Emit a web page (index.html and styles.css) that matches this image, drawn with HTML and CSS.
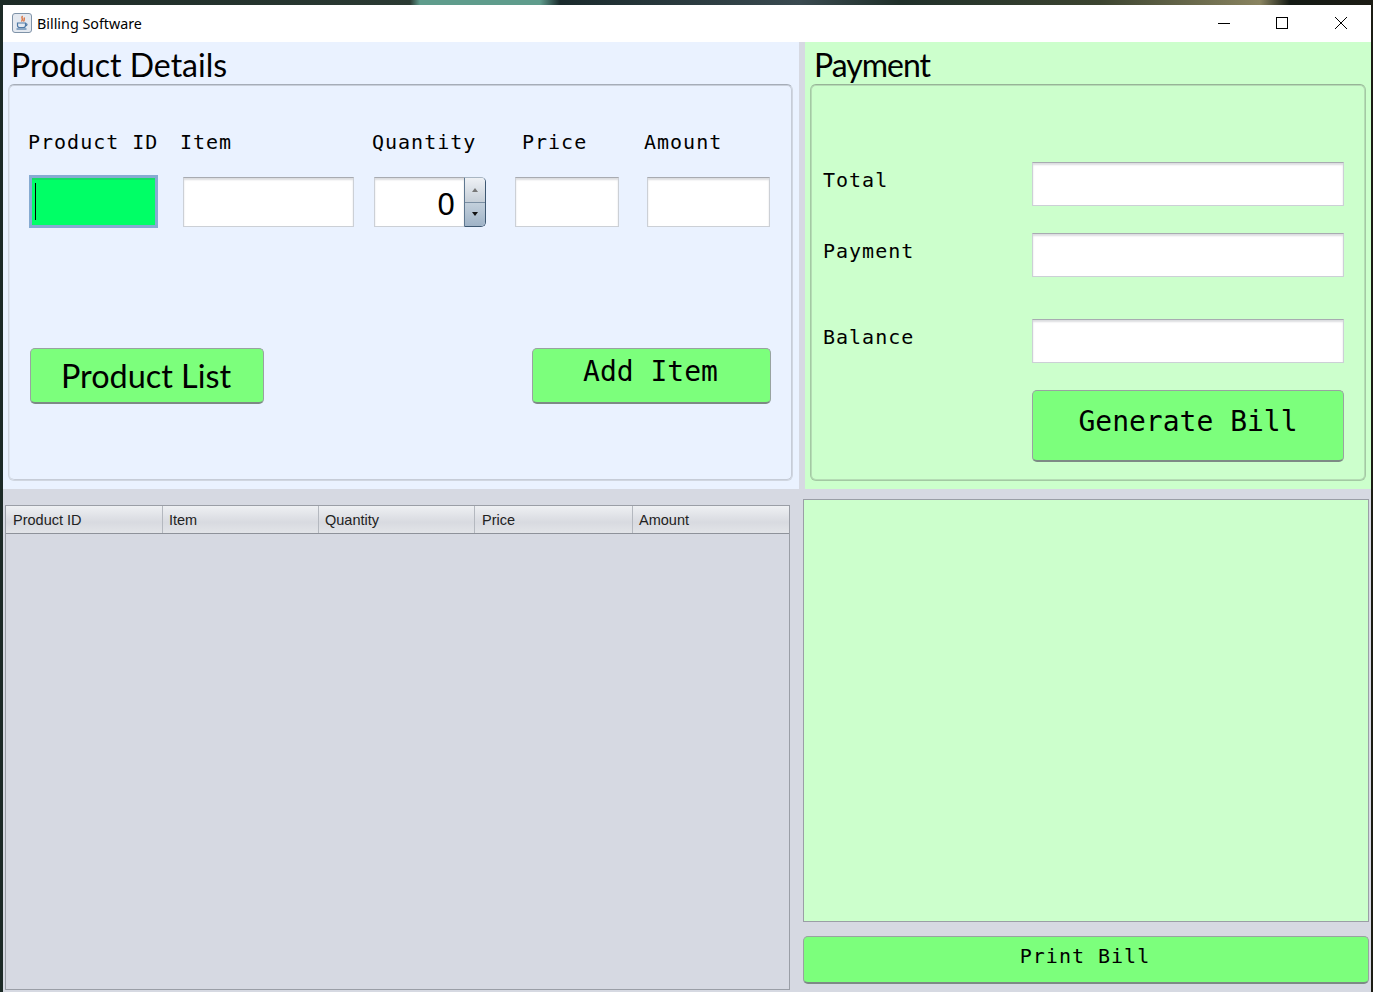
FILE: index.html
```html
<!DOCTYPE html>
<html>
<head>
    <meta charset="utf-8"/>
    <title>Billing Software</title>
    <link rel="stylesheet" href="styles.css">
</head>
<body>
<div class="window">
    <header class="titlebar">
        <div class="app-icon">
            <svg width="20" height="20" viewBox="0 0 20 20">
                <rect x="0.5" y="0.5" width="19" height="19" rx="2.5" fill="#e4e9f0" stroke="#7f93a8"/>
                <path d="M10.5 3C8.5 5 12 6 9.5 8.5M12.5 4.5C11.5 6 13 6.5 11.5 8.5" fill="none" stroke="#d9652b" stroke-width="1.3"/>
                <path d="M5.5 10h8v2.5c0 1.5-1 2-2 2h-4c-1 0-2-.5-2-2zM13.5 10.5c2 0 2 2.5-.2 2.5" fill="none" stroke="#4f7aa6" stroke-width="1.2"/>
                <path d="M4.5 16h10" stroke="#4f7aa6" stroke-width="1.2"/>
            </svg>
        </div>
        <span class="app-title">Billing Software</span>
        <div class="win-buttons">
            <svg class="win-min" width="12" height="12" viewBox="0 0 12 12"><path d="M0 6.5h12" stroke="#000" fill="none"/></svg>
            <svg width="12" height="12" viewBox="0 0 12 12"><rect x="0.5" y="0.5" width="11" height="11" stroke="#000" fill="none"/></svg>
            <svg width="12" height="12" viewBox="0 0 12 12"><path d="M0 0l12 12M12 0L0 12" stroke="#000" fill="none"/></svg>
        </div>
    </header>

    <div class="content">
        <div class="left-col">
            <section class="panel panel-blue">
                <h1 class="panel-title">Product Details</h1>
                <div class="group group-blue">
                    <div class="label-row">
                        <span class="mono-label lbl-id">Product ID</span>
                        <span class="mono-label lbl-item">Item</span>
                        <span class="mono-label lbl-qty">Quantity</span>
                        <span class="mono-label lbl-price">Price</span>
                        <span class="mono-label">Amount</span>
                    </div>
                    <div class="field-row">
                        <div class="field field-focus"><i class="caret"></i></div>
                        <div class="field field-item"></div>
                        <div class="spinner">
                            <div class="spin-value">0</div>
                            <div class="spin-btns">
                                <div class="spin-up"><i class="arrow-up"></i></div>
                                <div class="spin-down"><i class="arrow-down"></i></div>
                            </div>
                        </div>
                        <div class="field field-price"></div>
                        <div class="field field-amount"></div>
                    </div>
                    <div class="button-row">
                        <button class="btn btn-list">Product List</button>
                        <button class="btn btn-add">Add Item</button>
                    </div>
                </div>
            </section>

            <div class="table-box">
                <div class="table-head">
                    <div class="th th-1">Product ID</div>
                    <div class="th th-2">Item</div>
                    <div class="th th-3">Quantity</div>
                    <div class="th th-4">Price</div>
                    <div class="th th-5">Amount</div>
                </div>
            </div>
        </div>

        <div class="right-col">
            <section class="panel panel-green">
                <h1 class="panel-title title-pay">Payment</h1>
                <div class="group group-green">
                    <div class="pay-row pay-total">
                        <span class="mono-label">Total</span>
                        <div class="field pay-field"></div>
                    </div>
                    <div class="pay-row pay-payment">
                        <span class="mono-label">Payment</span>
                        <div class="field pay-field"></div>
                    </div>
                    <div class="pay-row pay-balance">
                        <span class="mono-label">Balance</span>
                        <div class="field pay-field"></div>
                    </div>
                    <button class="btn btn-generate">Generate Bill</button>
                </div>
            </section>

            <div class="bill-area"></div>
            <button class="btn btn-print">Print Bill</button>
        </div>
    </div>
</div>
</body>
</html>
```

FILE: styles.css
```css
html, body {
    margin: 0;
    padding: 0;
    height: 992px;
    overflow: hidden;
}
body {
    background: linear-gradient(90deg, #1c2a26 0, #2b3a33 410px, #5f9c8c 420px, #5f9c8c 540px, #1a2a2c 560px, #3a4a50 800px, #20302a 900px, #3c4430 1100px, #8a8460 1260px, #141a14 1290px, #1c1c14 100%);
}
.window {
    margin: 5px 2px 0 3px;
    height: 987px;
    display: flex;
    flex-direction: column;
    background: #d6d9e2;
}
.titlebar {
    height: 37px;
    flex: none;
    display: flex;
    align-items: center;
    background: #fff;
    padding-left: 9px;
}
.app-icon {
    width: 20px;
    height: 20px;
    margin-top: -1px;
}
.app-title {
    margin-left: 5px;
    font: 14.3px "Noto Sans", sans-serif;
    color: #000;
}
.win-buttons {
    margin-left: auto;
    display: flex;
    gap: 47px;
    padding-right: 24px;
    margin-top: -1px;
}
.win-min {
    margin-right: -1px;
}
.content {
    flex: 1;
    display: flex;
    gap: 6px;
}
.left-col {
    width: 796px;
    display: flex;
    flex-direction: column;
}
.right-col {
    width: 566px;
    display: flex;
    flex-direction: column;
}

/* titled panels */
.panel {
    height: 447px;
    box-sizing: border-box;
    padding-top: 6px;
}
.panel-blue {
    background: #eaf2ff;
    padding-left: 5px;
    padding-right: 6px;
}
.panel-green {
    background: #ccffcc;
    padding-left: 5px;
    padding-right: 5px;
}
.panel-title {
    margin: 0 0 0 3px;
    height: 36px;
    font: normal 32px/33px "Lato", sans-serif;
    color: #000;
}
.title-pay {
    margin-left: 4px;
    letter-spacing: -1px;
}
.group {
    height: 397px;
    box-sizing: border-box;
    border: 1px solid #d0d6e0;
    border-top: 1px solid #a6adb8;
    border-radius: 6px;
    box-shadow: inset 0 1px 0 #c9d0db, inset 1px 0 0 #dfe6f1, inset -1px 0 0 #c6ccd7, inset 0 -1px 0 #c6ccd7;
}
.group-green {
    border-color: #a3c9a3;
    border-top-color: #97b497;
    box-shadow: inset 0 1px 0 #b5dcb5, inset 1px 0 0 #b5dcb5, inset -1px 0 0 #b5dcb5, inset 0 -1px 0 #b5dcb5;
    padding: 0 21px 0 12px;
}

.mono-label {
    font: 20px/24px "DejaVu Sans Mono", monospace;
    letter-spacing: 1px;
    color: #000;
    white-space: pre;
}

/* product form */
.label-row {
    display: flex;
    padding: 45px 0 0 19px;
}
.lbl-id { width: 152px; }
.lbl-item { width: 192px; }
.lbl-qty { width: 150px; }
.lbl-price { width: 122px; }
.field-row {
    display: flex;
    align-items: flex-start;
    margin: 23px 0 0 20px;
}
.field {
    box-sizing: border-box;
    background: #fff;
    border: 1px solid #ccd0d6;
    border-top: 1px solid #a8abb1;
    box-shadow: inset 0 2px 2px #dcdde0;
}
.field-focus {
    width: 129px;
    height: 53px;
    margin-top: -2px;
    background: #00ff66;
    border: 3px solid #86abd2;
    border-top: 3px solid #86abd2;
    box-shadow: inset 0 2px 0 #14dd66;
    padding: 5px 0 0 3px;
}
.caret {
    display: block;
    width: 1px;
    height: 37px;
    background: #000;
}
.field-item {
    width: 171px;
    height: 50px;
    margin-left: 25px;
}
.spinner {
    width: 112px;
    height: 50px;
    margin-left: 20px;
    display: flex;
}
.spin-value {
    flex: 1;
    box-sizing: border-box;
    background: #fff;
    border: 1px solid #ccd0d6;
    border-top: 1px solid #a8abb1;
    border-right: 0;
    box-shadow: inset 0 2px 2px #dcdde0;
    text-align: right;
    padding-right: 9px;
    font: 31px/50px "Noto Sans", sans-serif;
    color: #000;
}
.spin-btns {
    width: 22px;
    box-sizing: border-box;
    border: 1px solid #3e5872;
    border-left: 1px solid #5f7890;
    border-top-color: #a9b6c2;
    border-radius: 0 5px 5px 0;
    display: flex;
    flex-direction: column;
    overflow: hidden;
}
.spin-up {
    flex: 1;
    background: linear-gradient(#eef1f5, #c6cfd8);
    border-bottom: 1px solid #7b8fa3;
    display: flex;
    align-items: center;
    justify-content: center;
}
.spin-down {
    flex: 1;
    background: linear-gradient(#c3d0dc, #9fb3c7);
    display: flex;
    align-items: center;
    justify-content: center;
}
.arrow-up {
    border-left: 3px solid transparent;
    border-right: 3px solid transparent;
    border-bottom: 4px solid #777;
}
.arrow-down {
    border-left: 3px solid transparent;
    border-right: 3px solid transparent;
    border-top: 4px solid #111;
}
.field-price {
    width: 104px;
    height: 50px;
    margin-left: 29px;
}
.field-amount {
    width: 123px;
    height: 50px;
    margin-left: 28px;
}

/* buttons */
.btn {
    display: block;
    box-sizing: border-box;
    padding: 0;
    background: #7cff7c;
    border: 1px solid #98a3a0;
    border-bottom: 2px solid #7d8a85;
    border-radius: 5px;
    color: #000;
    text-align: center;
}
.button-row {
    display: flex;
    justify-content: space-between;
    margin: 120px 21px 0 21px;
}
.btn-list {
    width: 234px;
    height: 56px;
    padding-right: 2px;
    font: 32.4px/52px "Lato", sans-serif;
}
.btn-add {
    width: 239px;
    height: 56px;
    padding: 0 2px 7px 0;
    font: 28px/34px "DejaVu Sans Mono", monospace;
}

/* payment form */
.pay-row {
    display: flex;
    align-items: center;
    justify-content: space-between;
}
.pay-total { padding-top: 77px; }
.pay-payment { padding-top: 27px; }
.pay-balance { padding-top: 42px; }
.pay-row .mono-label {
    position: relative;
    top: -4px;
}
.pay-field {
    width: 312px;
    height: 44px;
}
.btn-generate {
    width: 312px;
    height: 72px;
    margin: 27px 0 0 auto;
    padding-bottom: 8px;
    font: 28px/60px "DejaVu Sans Mono", monospace;
}

/* table */
.table-box {
    box-sizing: border-box;
    width: 785px;
    margin: 16px 0 2px 2px;
    flex: 1;
    border: 1px solid #9a9ea6;
    background: #d6d9e2;
}
.table-head {
    display: flex;
    height: 28px;
    box-sizing: border-box;
    border-bottom: 1px solid #8e929a;
    background: linear-gradient(#eef0f3, #d8dae0 60%, #e2e4e8);
}
.th {
    box-sizing: border-box;
    padding-left: 7px;
    border-right: 1px solid #b4b8bf;
    font: 14.5px/29px "Liberation Sans", sans-serif;
    color: #222;
}
.th-1 { width: 157px; }
.th-2 { width: 156px; padding-left: 6px; }
.th-3 { width: 156px; padding-left: 6px; }
.th-4 { width: 158px; }
.th-5 { flex: 1; border-right: 0; padding-left: 6px; }

/* bill */
.bill-area {
    box-sizing: border-box;
    height: 423px;
    margin: 10px 2px 0 -2px;
    background: #ccffcc;
    border: 1px solid #9a9ea6;
}
.btn-print {
    width: 566px;
    height: 48px;
    margin: 14px 0 0 -2px;
    padding: 0 2px 8px 0;
    font: 20px/30px "DejaVu Sans Mono", monospace;
    letter-spacing: 1px;
}
```
